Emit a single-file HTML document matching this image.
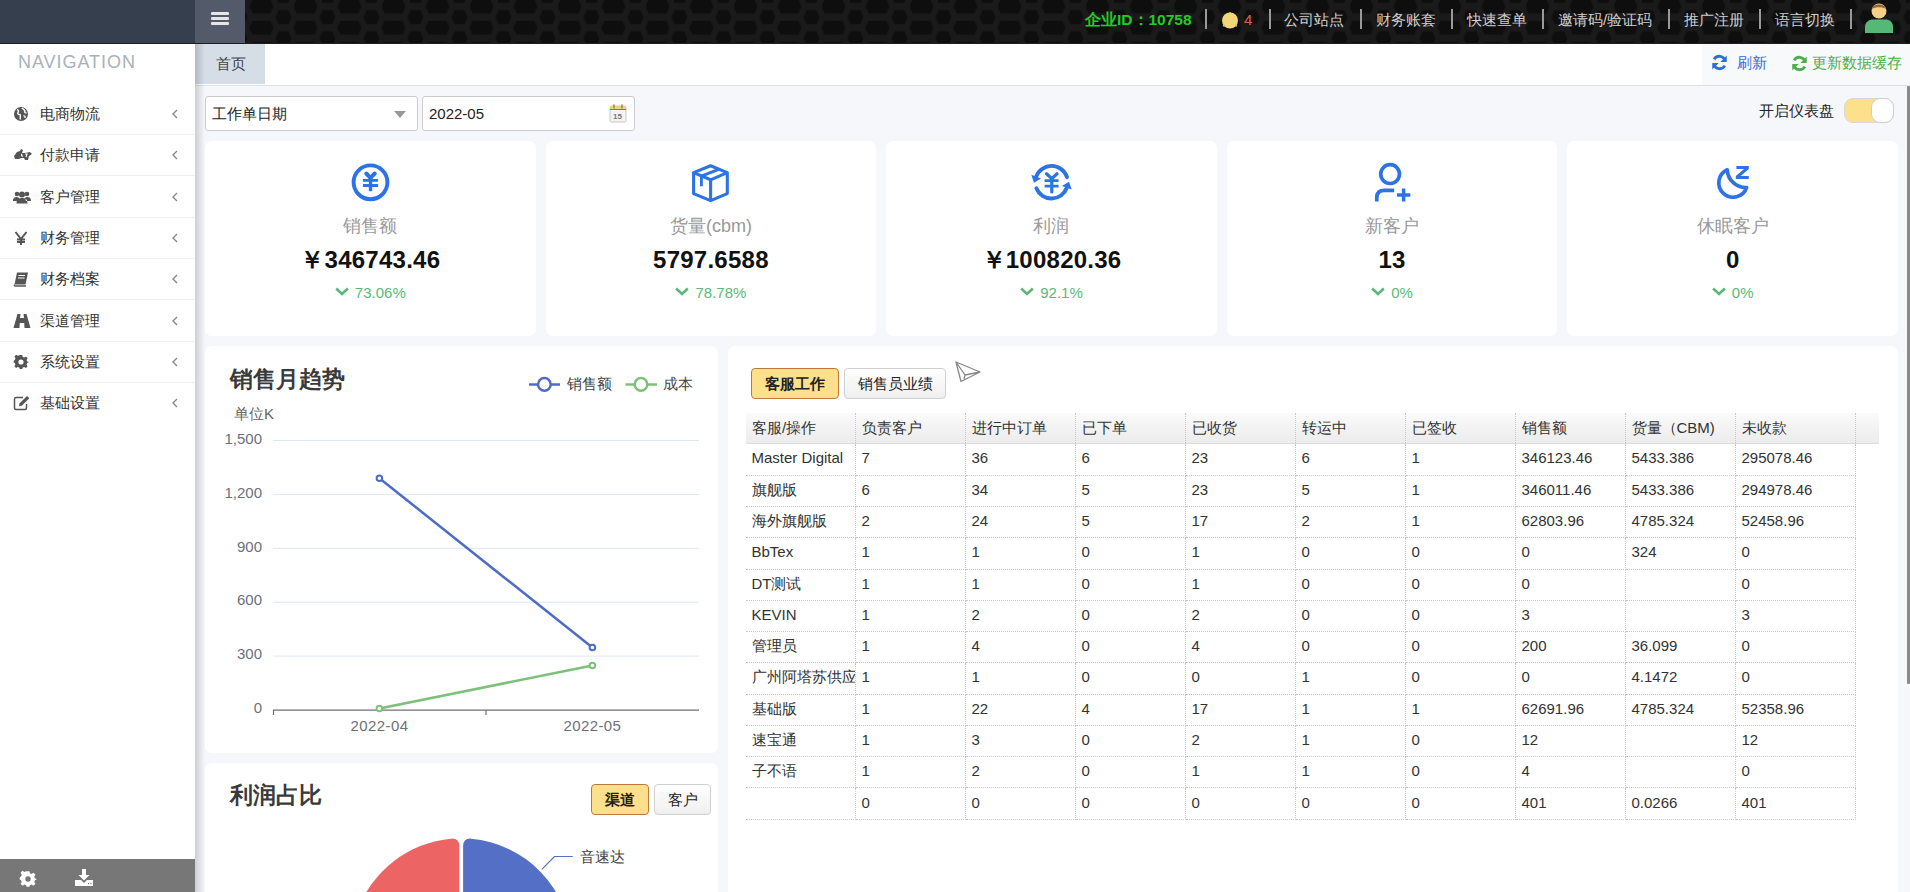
<!DOCTYPE html>
<html><head><meta charset="utf-8">
<style>
*{box-sizing:border-box;margin:0;padding:0}
html,body{width:1910px;height:892px;overflow:hidden;background:#f5f7fa;font-family:"Liberation Sans",sans-serif;color:#333}
.abs{position:absolute}
#hdr{position:absolute;left:0;top:0;width:1910px;height:44px;background:#131313;border-bottom:1px solid #1e1e1e}
#hdr-left{position:absolute;left:0;top:0;width:195px;height:43px;background:#363f4d}
#hamb{position:absolute;left:195px;top:0;width:50px;height:43px;background:#535a6a}
#hamb i{position:absolute;left:16px;width:18px;height:3px;background:#e6e6e6;border-radius:1px}
#side{position:absolute;left:0;top:44px;width:195px;height:848px;background:#fff}
#side .nav{position:absolute;left:18px;top:7.7px;font-size:18px;color:#a9b2bb;letter-spacing:0.95px}
.mi{position:absolute;left:0;width:195px;height:41px;border-bottom:1px solid #f0f0f0}
.mi .ic{position:absolute;left:13px;top:12px;width:16px;height:16px}
.mi .tx{position:absolute;left:40px;top:10px;font-size:15px;color:#333;line-height:20px}
.mi .ar{position:absolute;left:171px;top:15px;width:7px;height:10px}
#sidefoot{position:absolute;left:0;top:859px;width:195px;height:33px;background:#777}
#tabbar{position:absolute;left:195px;top:44px;width:1715px;height:42px;background:#fff;border-bottom:1px solid #dde1e6}
#main{position:absolute;left:195px;top:86px;width:1713px;height:806px;background:#f5f7fa}
#shadowL{position:absolute;left:195px;top:44px;width:10px;height:848px;background:linear-gradient(to right,rgba(0,0,0,.16),rgba(0,0,0,0));pointer-events:none}
.card{position:absolute;background:#fff;border-radius:7px}

#tab1{position:absolute;left:195px;top:44px;width:70px;height:40px;background:#d5dde6;font-size:15px;color:#444;line-height:40px;padding-left:21px}
#tbr{position:absolute;left:1702px;top:44px;width:208px;height:41px;background:#f8f9fb}
.tlink{position:absolute;top:52px;font-size:15px;line-height:22px}
.inp{position:absolute;top:96px;height:35px;background:#fff;border:1px solid #ccc;border-radius:3px;font-size:15px;color:#222;line-height:33px;padding-left:6px}

.sc{position:absolute;top:141px;width:331px;height:195px;background:#fff;border-radius:7px}
.sc svg.si{position:absolute;left:146px;top:21px;width:40px;height:40px}
.sc .lb{position:absolute;left:0;width:100%;top:73px;text-align:center;font-size:18px;color:#999;line-height:24px}
.sc .vl{position:absolute;left:0;width:100%;top:104px;letter-spacing:0.25px;text-align:center;font-size:24px;font-weight:bold;color:#111;line-height:30px}
.sc .pc{position:absolute;left:0;width:100%;top:142px;text-align:center;font-size:15px;color:#5cb878;line-height:20px}
.sc .pc svg{display:inline-block;vertical-align:top;margin-top:3.8px;margin-right:6px}

.pnl{position:absolute;background:#fff;border-radius:7px;overflow:hidden}
.ptitle{position:absolute;font-size:22.5px;font-weight:bold;color:#3a3a3a;line-height:28px;white-space:nowrap}
.btn{position:absolute;height:31px;border-radius:4px;font-size:15px;line-height:29px;text-align:center;color:#222}
.btn.on{background:#fde08b;border:1px solid #c2783a;font-weight:bold}
.btn.off{background:linear-gradient(#fff,#efefef);border:1px solid #d0d0d0}

#tbl{position:absolute;left:18px;top:67px;border-collapse:collapse;table-layout:fixed;font-size:15px;color:#333}
#tbl td{height:31.27px;padding:0 0 2px 5.5px;border-right:1px dotted #c8c8c8;border-bottom:1px dotted #c8c8c8;white-space:nowrap;overflow:hidden;line-height:20px}
#thd{position:absolute;left:18px;top:67px;width:1133px;height:31px;background:linear-gradient(#fafafa,#ececec);border-bottom:1px solid #dcdcdc}
#thd span{position:absolute;top:0;height:30px;line-height:30px;padding-left:6px;border-right:1px dotted #c8c8c8;font-size:15px;color:#333;white-space:nowrap}

.hl{position:absolute;top:10px;font-size:15px;line-height:20px;color:#cfcfcf;white-space:nowrap}
.hsep{position:absolute;top:9px;width:2px;height:20px;background:#9a9a9a}
</style></head><body>
<div id="hdr">
  <svg width="1910" height="43" style="position:absolute;left:0;top:0">
    <defs>
      <pattern id="hex" width="44" height="21.2" patternUnits="userSpaceOnUse" x="19.5" y="-4.1">
        <rect width="44" height="21.2" fill="#1a1a1a"/>
        <path d="M10,10.6 L13,3.6 L31,3.6 L34,10.6 L31,17.6 L13,17.6 Z" fill="#0e0e0e"/>
        <path d="M-8,0 L-5,-7 L5,-7 L8,0 L5,7 L-5,7 Z M36,0 L39,-7 L49,-7 L52,0 L49,7 L39,7 Z M-8,21.2 L-5,14.2 L5,14.2 L8,21.2 L5,28.2 L-5,28.2 Z M36,21.2 L39,14.2 L49,14.2 L52,21.2 L49,28.2 L39,28.2 Z" fill="#0e0e0e"/>
      </pattern>
    </defs>
    <rect x="245" y="0" width="1665" height="43" fill="url(#hex)"/>
  </svg>
  <div id="hdr-left"></div>
<div class="hl" style="left:1085px;color:#22cc22;font-weight:bold;font-size:15.5px;top:10px">企业ID：10758</div>
<div class="hsep" style="left:1205px"></div>
<svg width="20" height="20" viewBox="0 0 20 20" style="position:absolute;left:1220px;top:10px"><circle cx="10" cy="10.5" r="8" fill="#f1d67a"/><path d="M10,2 L10,4 M3,16 L5,15 M17,16 L15,15" stroke="#e8c060" stroke-width="1.5"/></svg>
<div class="hl" style="left:1244px;color:#e2604a">4</div>
<div class="hsep" style="left:1269px"></div>
<div class="hl" style="left:1284px">公司站点</div>
<div class="hsep" style="left:1360px"></div>
<div class="hl" style="left:1376px">财务账套</div>
<div class="hsep" style="left:1451px"></div>
<div class="hl" style="left:1467px">快速查单</div>
<div class="hsep" style="left:1542px"></div>
<div class="hl" style="left:1558px">邀请码/验证码</div>
<div class="hsep" style="left:1668px"></div>
<div class="hl" style="left:1684px">推广注册</div>
<div class="hsep" style="left:1759px"></div>
<div class="hl" style="left:1775px">语言切换</div>
<div class="hsep" style="left:1850px"></div>
<svg width="30" height="32" viewBox="0 0 30 32" style="position:absolute;left:1865px;top:2px"><circle cx="14" cy="9" r="7.5" fill="#f7cf86"/><path d="M7,7 C7,1 21,1 21,7 C18,4.5 10,4.5 7,7 Z" fill="#8a6a3a"/><path d="M0,31 L0,25 C0,20 4,17.5 8,17.5 L20,17.5 C25,17.5 28,20 28,25 L28,31 Z" fill="#56b877"/></svg>
  <div id="hamb"><i style="top:12px"></i><i style="top:17px"></i><i style="top:22px"></i></div>
</div>
<div id="side">
  <div class="nav">NAVIGATION</div>
  <div class="mi" style="top:50.0px"><svg class="ic" viewBox="0 0 16 16"><circle cx="8" cy="8" r="7" fill="#555"/><path d="M4,3.5 C5.5,4 6,5 5,6.5 C4,7.5 5.5,9 7,8.5 C8,10 6.5,11 7.5,13.5 M9,2 C10,3.5 11.5,3.5 12,5 C11,6 12,7 13.5,7 M10.5,10 C11.5,9.5 12.5,10.5 12,12" stroke="#fff" stroke-width="1.4" fill="none"/></svg><span class="tx">电商物流</span><svg class="ar" viewBox="0 0 7 10"><path d="M6,1 L2,5 L6,9" stroke="#888" stroke-width="1.4" fill="none"/></svg></div>
  <div class="mi" style="top:91.3px"><svg class="ic" viewBox="0 0 20 16" style="width:20px;left:13px"><path d="M1,9 L4,5 L7,4 L8,2 L10,3 L9,6 L12,6 L17,5 L19,7 L16,9 L15,13 L12,13 L11,11 L8,11 L6,12 L2,12 Z" fill="#555"/><path d="M9,7 C8,8 8.5,9.5 10,9 M12,7 L14,7 L13,10" stroke="#fff" stroke-width="1.2" fill="none"/></svg><span class="tx">付款申请</span><svg class="ar" viewBox="0 0 7 10"><path d="M6,1 L2,5 L6,9" stroke="#888" stroke-width="1.4" fill="none"/></svg></div>
  <div class="mi" style="top:132.6px"><svg class="ic" viewBox="0 0 18 16" style="width:18px"><circle cx="4" cy="5" r="2.3" fill="#555"/><circle cx="14" cy="5" r="2.3" fill="#555"/><circle cx="9" cy="5.5" r="3" fill="#555"/><path d="M0,12 C0,8.5 2,8 4,8 C5,8 6,9 6,9 L5,12 Z M18,12 C18,8.5 16,8 14,8 C13,8 12,9 12,9 L13,12 Z M3.5,14.5 C3.5,10 6,9 9,9 C12,9 14.5,10 14.5,14.5 Z" fill="#555"/></svg><span class="tx">客户管理</span><svg class="ar" viewBox="0 0 7 10"><path d="M6,1 L2,5 L6,9" stroke="#888" stroke-width="1.4" fill="none"/></svg></div>
  <div class="mi" style="top:173.9px"><svg class="ic" viewBox="0 0 16 16"><path d="M2.5,2 L8,9 L13.5,2 M8,9 L8,15 M4,9.5 L12,9.5 M4,12 L12,12" stroke="#555" stroke-width="2" fill="none"/></svg><span class="tx">财务管理</span><svg class="ar" viewBox="0 0 7 10"><path d="M6,1 L2,5 L6,9" stroke="#888" stroke-width="1.4" fill="none"/></svg></div>
  <div class="mi" style="top:215.2px"><svg class="ic" viewBox="0 0 16 16"><path d="M4,1.5 L15,1.5 L12.5,13.5 L1.5,13.5 Z" fill="#555"/><path d="M1.5,13.5 C1,14.5 1.5,15 2.5,15 L13,15" stroke="#555" stroke-width="1.3" fill="none"/><path d="M5.5,4.5 L12,4.5 M5,7 L11.5,7" stroke="#fff" stroke-width="1" /></svg><span class="tx">财务档案</span><svg class="ar" viewBox="0 0 7 10"><path d="M6,1 L2,5 L6,9" stroke="#888" stroke-width="1.4" fill="none"/></svg></div>
  <div class="mi" style="top:256.5px"><svg class="ic" viewBox="0 0 18 16" style="width:18px"><path d="M4.5,1 L7.5,1 L7,5 L11,5 L10.5,1 L13.5,1 L17.5,15 L11.5,15 L11.2,10 L6.8,10 L6.5,15 L0.5,15 Z" fill="#555"/></svg><span class="tx">渠道管理</span><svg class="ar" viewBox="0 0 7 10"><path d="M6,1 L2,5 L6,9" stroke="#888" stroke-width="1.4" fill="none"/></svg></div>
  <div class="mi" style="top:297.8px"><svg class="ic" viewBox="0 0 16 16"><path d="M6.6,0.8 L9.4,0.8 L9.8,2.9 L11.5,3.6 L13.3,2.4 L15.2,4.3 L14,6.1 L14.7,7.8 L16,8.2 L16,9 L14.7,9.6 L14,11.3 L15.2,13.1 L13.3,15 L11.5,13.8 L9.8,14.5 L9.4,16 L6.6,16 L6.2,14.5 L4.5,13.8 L2.7,15 L0.8,13.1 L2,11.3 L1.3,9.6 L0,9 L0,7 L1.3,6.1 L2,4.3 L0.8,2.4 L2.7,0.5 L4.5,1.7 L6.2,1 Z" fill="#555" transform="scale(0.92) translate(0.7,0.3)"/><circle cx="8" cy="8" r="2.6" fill="#fff"/></svg><span class="tx">系统设置</span><svg class="ar" viewBox="0 0 7 10"><path d="M6,1 L2,5 L6,9" stroke="#888" stroke-width="1.4" fill="none"/></svg></div>
  <div class="mi" style="top:339.1px;border-bottom:none"><svg class="ic" viewBox="0 0 18 16" style="width:18px"><path d="M10,2.5 L3,2.5 C2,2.5 1.5,3 1.5,4 L1.5,13 C1.5,14 2,14.5 3,14.5 L12,14.5 C13,14.5 13.5,14 13.5,13 L13.5,9" stroke="#555" stroke-width="1.5" fill="none"/><path d="M6,11 L6.5,8.5 L14,1 L16.3,3.3 L8.8,10.8 Z" fill="#555"/></svg><span class="tx">基础设置</span><svg class="ar" viewBox="0 0 7 10"><path d="M6,1 L2,5 L6,9" stroke="#888" stroke-width="1.4" fill="none"/></svg></div>
</div>
<div id="sidefoot"><svg width="18" height="18" viewBox="0 0 16 16" style="position:absolute;left:19px;top:11px"><path d="M6.6,0.8 L9.4,0.8 L9.8,2.9 L11.5,3.6 L13.3,2.4 L15.2,4.3 L14,6.1 L14.7,7.8 L16,8.2 L16,9 L14.7,9.6 L14,11.3 L15.2,13.1 L13.3,15 L11.5,13.8 L9.8,14.5 L9.4,16 L6.6,16 L6.2,14.5 L4.5,13.8 L2.7,15 L0.8,13.1 L2,11.3 L1.3,9.6 L0,9 L0,7 L1.3,6.1 L2,4.3 L0.8,2.4 L2.7,0.5 L4.5,1.7 L6.2,1 Z" fill="#fff" transform="scale(0.92) translate(0.7,0.3)"/><circle cx="8" cy="8" r="2.4" fill="#777"/></svg>
<svg width="18" height="18" viewBox="0 0 18 18" style="position:absolute;left:75px;top:10px"><path d="M7,0 L11,0 L11,6 L14.5,6 L9,11.5 L3.5,6 L7,6 Z" fill="#fff"/><path d="M0,11 L6,11 L9,14 L12,11 L18,11 L18,17 L0,17 Z" fill="#fff"/><rect x="13" y="14" width="1.2" height="1.2" fill="#777"/><rect x="15.3" y="14" width="1.2" height="1.2" fill="#777"/></svg></div>
<div id="tabbar"></div>
<div id="main"></div>
<div id="tab1">首页</div>
<div id="tbr"></div>
<div class="tlink" style="left:1711px;color:#2a6fdb"><svg width="17" height="17" viewBox="0 0 16 16" style="position:absolute;left:0;top:2px"><path d="M13.2,6.5 A5.5,5.5 0 0 0 3,5 M2.8,9.5 A5.5,5.5 0 0 0 13,11" stroke="#2a6fdb" stroke-width="2.6" fill="none"/><path d="M14.8,1.5 L14.8,7.5 L8.8,7.5 Z M1.2,14.5 L1.2,8.5 L7.2,8.5 Z" fill="#2a6fdb"/></svg><span style="position:absolute;left:26px;white-space:nowrap">刷新</span></div>
<div class="tlink" style="left:1791px;color:#4cae4c"><svg width="17" height="17" viewBox="0 0 16 16" style="position:absolute;left:0;top:3px"><path d="M13.2,6.5 A5.5,5.5 0 0 0 3,5 M2.8,9.5 A5.5,5.5 0 0 0 13,11" stroke="#4cae4c" stroke-width="2.6" fill="none"/><path d="M14.8,1.5 L14.8,7.5 L8.8,7.5 Z M1.2,14.5 L1.2,8.5 L7.2,8.5 Z" fill="#4cae4c"/></svg><span style="position:absolute;left:21px;white-space:nowrap">更新数据缓存</span></div>
<div class="inp" style="left:205px;width:213px">工作单日期<svg width="12" height="7" style="position:absolute;left:188px;top:14px"><path d="M0,0 L12,0 L6,7 Z" fill="#999"/></svg></div>
<div class="inp" style="left:422px;width:213px">2022-05<svg width="18" height="19" viewBox="0 0 18 19" style="position:absolute;left:186px;top:7px"><rect x="1" y="2" width="16" height="16" rx="1.5" fill="#f3f3f3" stroke="#c8c8c8"/><rect x="1" y="2" width="16" height="3.5" fill="#f5d27a"/><rect x="1" y="5" width="16" height="1" fill="#e05050"/><rect x="4" y="0.5" width="2" height="4" fill="#999"/><rect x="12" y="0.5" width="2" height="4" fill="#999"/><text x="4" y="15" font-size="8" font-family="Liberation Sans, sans-serif" fill="#777" font-weight="bold">15</text></svg></div>
<div class="abs" style="left:1759px;top:100px;font-size:15px;line-height:22px;color:#222">开启仪表盘</div>
<div class="abs" style="left:1844px;top:98px;width:50px;height:25px;border-radius:9px;background:#fde08b;border:1px solid #d8d8d8"></div>
<div class="abs" style="left:1871px;top:98px;width:23px;height:25px;border-radius:9px;background:#fff;border:1px solid #cfcfcf"></div>
<div class="sc" style="left:205.0px;width:330.6px"><div class="lb">销售额</div><div class="vl">￥346743.46</div><div class="pc"><svg width="14" height="9" viewBox="0 0 14 9"><path d="M1.2,1.5 L7,7 L12.8,1.5" stroke="#5cb878" stroke-width="2.6" fill="none"/></svg>73.06%</div></div>
<div class="sc" style="left:545.6px;width:330.6px"><div class="lb">货量(cbm)</div><div class="vl">5797.6588</div><div class="pc"><svg width="14" height="9" viewBox="0 0 14 9"><path d="M1.2,1.5 L7,7 L12.8,1.5" stroke="#5cb878" stroke-width="2.6" fill="none"/></svg>78.78%</div></div>
<div class="sc" style="left:886.2px;width:330.6px"><div class="lb">利润</div><div class="vl">￥100820.36</div><div class="pc"><svg width="14" height="9" viewBox="0 0 14 9"><path d="M1.2,1.5 L7,7 L12.8,1.5" stroke="#5cb878" stroke-width="2.6" fill="none"/></svg>92.1%</div></div>
<div class="sc" style="left:1226.8px;width:330.6px"><div class="lb">新客户</div><div class="vl">13</div><div class="pc"><svg width="14" height="9" viewBox="0 0 14 9"><path d="M1.2,1.5 L7,7 L12.8,1.5" stroke="#5cb878" stroke-width="2.6" fill="none"/></svg>0%</div></div>
<div class="sc" style="left:1567.4px;width:330.6px"><div class="lb">休眠客户</div><div class="vl">0</div><div class="pc"><svg width="14" height="9" viewBox="0 0 14 9"><path d="M1.2,1.5 L7,7 L12.8,1.5" stroke="#5cb878" stroke-width="2.6" fill="none"/></svg>0%</div></div>
<div class="pnl" style="left:205px;top:346px;width:513px;height:407px"><svg width="1910" height="892" style="position:absolute;left:-205px;top:-346px" font-family="Liberation Sans, sans-serif" font-size="15" fill="#6e7079">
<line x1="273" y1="440.5" x2="699" y2="440.5" stroke="#e0e6f1" stroke-width="1"/><line x1="273" y1="494.4" x2="699" y2="494.4" stroke="#e0e6f1" stroke-width="1"/><line x1="273" y1="548.3" x2="699" y2="548.3" stroke="#e0e6f1" stroke-width="1"/><line x1="273" y1="602.2" x2="699" y2="602.2" stroke="#e0e6f1" stroke-width="1"/><line x1="273" y1="656.1" x2="699" y2="656.1" stroke="#e0e6f1" stroke-width="1"/>
<line x1="273" y1="710.1" x2="699" y2="710.1" stroke="#6e7079" stroke-width="1.2"/>
<path d="M273.5,710 L273.5,715 M486,710 L486,715" stroke="#6e7079" stroke-width="1.2"/>
<text x="262" y="443.7" text-anchor="end">1,500</text><text x="262" y="497.6" text-anchor="end">1,200</text><text x="262" y="551.5" text-anchor="end">900</text><text x="262" y="605.4" text-anchor="end">600</text><text x="262" y="659.3" text-anchor="end">300</text><text x="262" y="713.2" text-anchor="end">0</text>
<text x="379.5" y="731" text-anchor="middle" letter-spacing="0.4">2022-04</text>
<text x="592.4" y="731" text-anchor="middle" letter-spacing="0.4">2022-05</text>
<text x="234" y="419" fill="#666">单位K</text>
<polyline points="379.4,478.3 592.4,647.5" stroke="#4e6cc6" stroke-width="2.5" fill="none"/>
<polyline points="379.4,708.5 592.4,665.5" stroke="#7dc07a" stroke-width="2.5" fill="none"/>
<circle cx="379.4" cy="478.3" r="2.8" stroke="#4e6cc6" stroke-width="2" fill="#fff"/>
<circle cx="592.4" cy="647.5" r="2.8" stroke="#4e6cc6" stroke-width="2" fill="#fff"/>
<circle cx="379.4" cy="708.5" r="2.8" stroke="#7dc07a" stroke-width="2" fill="#fff"/>
<circle cx="592.4" cy="665.5" r="2.8" stroke="#7dc07a" stroke-width="2" fill="#fff"/>
<line x1="529" y1="384.4" x2="560" y2="384.4" stroke="#4e6cc6" stroke-width="2.5"/>
<circle cx="544.4" cy="384.4" r="6.3" stroke="#4e6cc6" stroke-width="2.5" fill="#fff"/>
<line x1="625.5" y1="384.4" x2="657" y2="384.4" stroke="#7dc07a" stroke-width="2.5"/>
<circle cx="641" cy="384.4" r="6.3" stroke="#7dc07a" stroke-width="2.5" fill="#fff"/>
<text x="567" y="388.5" fill="#444">销售额</text>
<text x="663" y="388.5" fill="#444">成本</text>
</svg><div class="ptitle" style="left:25px;top:20px">销售月趋势</div></div>
<div class="pnl" style="left:205px;top:763px;width:513px;height:140px"><svg width="1910" height="892" style="position:absolute;left:-205px;top:-763px" font-family="Liberation Sans, sans-serif" font-size="15">
<path d="M459.30,948.6 L459.30,846.22 Q459.30,838.22 451.30,838.64 A110.4,110.4 0 0 0 383.14,1026.66 Z" fill="#ec6464"/>
<path d="M463.10,948.6 L463.10,846.22 Q463.10,838.22 471.10,838.64 A110.4,110.4 0 0 1 480.37,1057.32 Z" fill="#5470c6"/>
<polyline points="541.8,869.4 554.4,856.5 572.8,856.5" stroke="#5470c6" stroke-width="1.2" fill="none"/>
<text x="579.5" y="861.5" fill="#444">音速达</text>
</svg><div class="ptitle" style="left:25px;top:19px">利润占比</div><div class="btn on" style="left:386px;top:21px;width:58px">渠道</div><div class="btn off" style="left:449px;top:21px;width:57px">客户</div></div>
<div class="pnl" style="left:728px;top:346px;width:1170px;height:560px"><div class="btn on" style="left:23px;top:22px;width:88px">客服工作</div><div class="btn off" style="left:116px;top:22px;width:102px">销售员业绩</div><svg width="26" height="22" viewBox="0 0 26 22" style="position:absolute;left:227px;top:15px"><path d="M1,1 L25,11 L6,20.5 Z M1,1 L10,14 L25,11 M10,14 L9,18" stroke="#888" stroke-width="1.3" fill="none" stroke-linejoin="round"/></svg><div id="thd"><span style="left:0px;width:109.5px">客服/操作</span><span style="left:109.5px;width:110px">负责客户</span><span style="left:219.5px;width:110px">进行中订单</span><span style="left:329.5px;width:110px">已下单</span><span style="left:439.5px;width:110px">已收货</span><span style="left:549.5px;width:110px">转运中</span><span style="left:659.5px;width:110px">已签收</span><span style="left:769.5px;width:110px">销售额</span><span style="left:879.5px;width:110px">货量（CBM)</span><span style="left:989.5px;width:120px">未收款</span></div><table id="tbl" style="top:98px;width:1109.5px"><colgroup><col style="width:109.5px"><col style="width:110px"><col style="width:110px"><col style="width:110px"><col style="width:110px"><col style="width:110px"><col style="width:110px"><col style="width:110px"><col style="width:110px"><col style="width:120px"></colgroup><tr><td>Master Digital</td><td>7</td><td>36</td><td>6</td><td>23</td><td>6</td><td>1</td><td>346123.46</td><td>5433.386</td><td>295078.46</td></tr><tr><td>旗舰版</td><td>6</td><td>34</td><td>5</td><td>23</td><td>5</td><td>1</td><td>346011.46</td><td>5433.386</td><td>294978.46</td></tr><tr><td>海外旗舰版</td><td>2</td><td>24</td><td>5</td><td>17</td><td>2</td><td>1</td><td>62803.96</td><td>4785.324</td><td>52458.96</td></tr><tr><td>BbTex</td><td>1</td><td>1</td><td>0</td><td>1</td><td>0</td><td>0</td><td>0</td><td>324</td><td>0</td></tr><tr><td>DT测试</td><td>1</td><td>1</td><td>0</td><td>1</td><td>0</td><td>0</td><td>0</td><td></td><td>0</td></tr><tr><td>KEVIN</td><td>1</td><td>2</td><td>0</td><td>2</td><td>0</td><td>0</td><td>3</td><td></td><td>3</td></tr><tr><td>管理员</td><td>1</td><td>4</td><td>0</td><td>4</td><td>0</td><td>0</td><td>200</td><td>36.099</td><td>0</td></tr><tr><td>广州阿塔苏供应商</td><td>1</td><td>1</td><td>0</td><td>0</td><td>1</td><td>0</td><td>0</td><td>4.1472</td><td>0</td></tr><tr><td>基础版</td><td>1</td><td>22</td><td>4</td><td>17</td><td>1</td><td>1</td><td>62691.96</td><td>4785.324</td><td>52358.96</td></tr><tr><td>速宝通</td><td>1</td><td>3</td><td>0</td><td>2</td><td>1</td><td>0</td><td>12</td><td></td><td>12</td></tr><tr><td>子不语</td><td>1</td><td>2</td><td>0</td><td>1</td><td>1</td><td>0</td><td>4</td><td></td><td>0</td></tr><tr><td></td><td>0</td><td>0</td><td>0</td><td>0</td><td>0</td><td>0</td><td>401</td><td>0.0266</td><td>401</td></tr></table></div>
<svg width="1910" height="892" style="position:absolute;left:0;top:0;pointer-events:none"><circle cx="370.5" cy="182.3" r="16.9" stroke="#2b73e6" stroke-width="3.9" fill="none"/>
<path d="M366.3,173.5 L370.5,177.8 L374.7,173.5" stroke="#2b73e6" stroke-width="4" fill="none" stroke-linecap="round"/>
<path d="M362.9,180.4 L378.1,180.4 M362.9,185.5 L378.1,185.5" stroke="#2b73e6" stroke-width="2.8"/>
<path d="M370.5,177 L370.5,191.2" stroke="#2b73e6" stroke-width="3.4"/><path d="M710.6,165.8 L727.3,172.6 L727.3,193.6 L710.6,200.6 L693.6,193.6 L693.6,172.6 Z" stroke="#2b73e6" stroke-width="3.1" fill="none" stroke-linejoin="round"/>
<path d="M693.6,172.6 L710.6,179.8 L727.3,172.6 M710.6,179.8 L710.6,200.6" stroke="#2b73e6" stroke-width="3.1" fill="none" stroke-linejoin="round"/>
<path d="M701.4,176.2 L718.6,169.3 M701.4,176 L701.4,186.2" stroke="#2b73e6" stroke-width="2.9" fill="none"/><path d="M1067.00,177.16 A16.3,16.3 0 0 0 1036.18,176.63 M1036.39,188.31 A16.3,16.3 0 0 0 1066.82,187.77" stroke="#2b73e6" stroke-width="3.9" fill="none" stroke-linecap="round"/>
<path d="M1033.96,182.73 L1031.30,174.85 L1041.07,178.40 Z M1069.04,181.67 L1071.70,189.55 L1061.93,186.00 Z" fill="#2b73e6"/>
<path d="M1046.5,173.8 L1051.8,178.6 L1057,173.8" stroke="#2b73e6" stroke-width="3.3" fill="none" stroke-linecap="round"/>
<path d="M1044.6,180.6 L1058.6,180.6 M1044.6,186.2 L1058.6,186.2" stroke="#2b73e6" stroke-width="2.8"/>
<path d="M1051.8,178 L1051.8,192" stroke="#2b73e6" stroke-width="3.2" stroke-linecap="round"/><circle cx="1390.1" cy="174.1" r="9.4" stroke="#2b73e6" stroke-width="3.7" fill="none"/>
<path d="M1376.8,201.5 L1376.8,197.5 Q1376.8,190.3 1384.5,190.3 L1394.2,190.3" stroke="#2b73e6" stroke-width="3.7" fill="none"/>
<path d="M1403.6,188.6 L1403.6,201.6 M1397,195.1 L1410.3,195.1" stroke="#2b73e6" stroke-width="3.5"/><path d="M1727.3,169.8 A14.3,14.3 0 1 0 1746.6,187.6 A18.6,18.6 0 0 1 1727.3,169.8 Z" stroke="#2b73e6" stroke-width="3.7" fill="none" stroke-linejoin="round"/>
<path d="M1736.4,166.1 L1748.8,166.1 L1748.8,169 L1740.6,176 L1748.8,176 L1748.8,178.9 L1735.8,178.9 L1735.8,176 L1744.1,169 L1736.4,169 Z" fill="#2b73e6"/></svg>
<div id="shadowL"></div>
<div class="abs" style="left:1907px;top:86px;width:3px;height:598px;background:#8a8a8a;border-radius:1px"></div>
</body></html>
